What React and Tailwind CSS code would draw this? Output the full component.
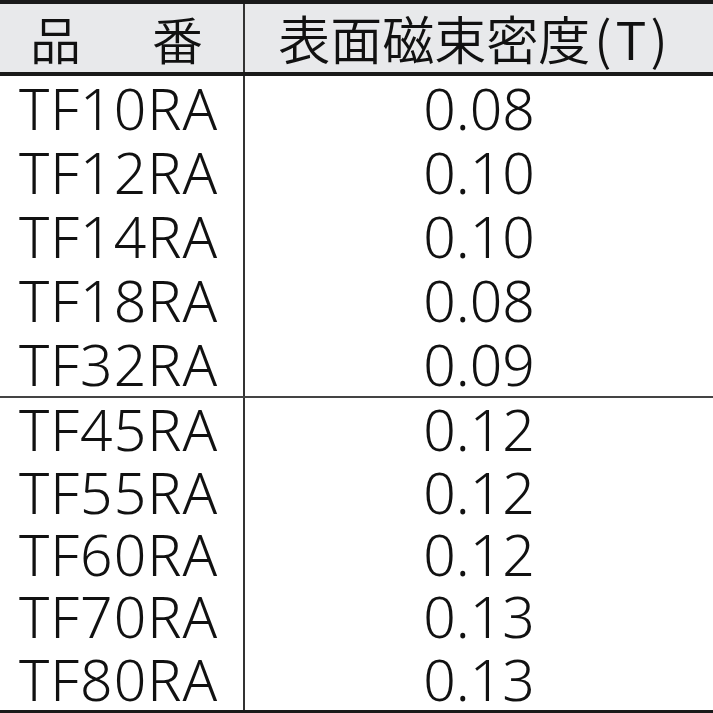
import React from "react";

const groupA = [
  ["TF10RA", "0.08"],
  ["TF12RA", "0.10"],
  ["TF14RA", "0.10"],
  ["TF18RA", "0.08"],
  ["TF32RA", "0.09"],
];

const groupB = [
  ["TF45RA", "0.12"],
  ["TF55RA", "0.12"],
  ["TF60RA", "0.12"],
  ["TF70RA", "0.13"],
  ["TF80RA", "0.13"],
];

const Row = ({ name, value, tall }) => (
  <div className={`flex ${tall ? "h-[64px]" : "h-[62.4px]"}`}>
    <div className="w-[245px] shrink-0 border-r-2 border-[#333] flex items-center pl-[19px] text-[57px] font-[350] leading-[58px] tracking-[1px] whitespace-nowrap">
      {name}
    </div>
    <div className="flex-1 flex items-center justify-center text-[57px] font-[350] leading-[58px] whitespace-nowrap">
      {value}
    </div>
  </div>
);

const App = () => {
  return (
    <div
      className="w-[713px] h-[713px] bg-white text-[#111] overflow-hidden"
      style={{ fontFamily: '"Noto Sans", "Noto Sans CJK JP", sans-serif' }}
    >
      <div className="border-t-[4px] border-b-[4px] border-[#1a1a1a] bg-[#e8e9eb] flex h-[76px]">
        <div
          className="w-[245px] shrink-0 border-r-2 border-[#333] flex items-center justify-between pl-[30px] pr-[40px] text-[51px] font-[350] leading-none"
          style={{ fontFamily: '"Noto Sans CJK JP", sans-serif' }}
        >
          <span>品</span>
          <span>番</span>
        </div>
        <div
          className="flex-1 flex items-center justify-center pr-[8px] text-[52px] font-[350] leading-none"
          style={{ fontFamily: '"Noto Sans CJK JP", sans-serif' }}
        >
          表面磁束密度<span className="ml-[4px] tracking-[4px]">(T)</span>
        </div>
      </div>
      <div>
        {groupA.map(([n, v]) => (
          <Row key={n} name={n} value={v} tall />
        ))}
      </div>
      <div className="border-t-2 border-[#444] border-b-[3px] border-b-[#1a1a1a]">
        {groupB.map(([n, v]) => (
          <Row key={n} name={n} value={v} />
        ))}
      </div>
    </div>
  );
};

export default App;
